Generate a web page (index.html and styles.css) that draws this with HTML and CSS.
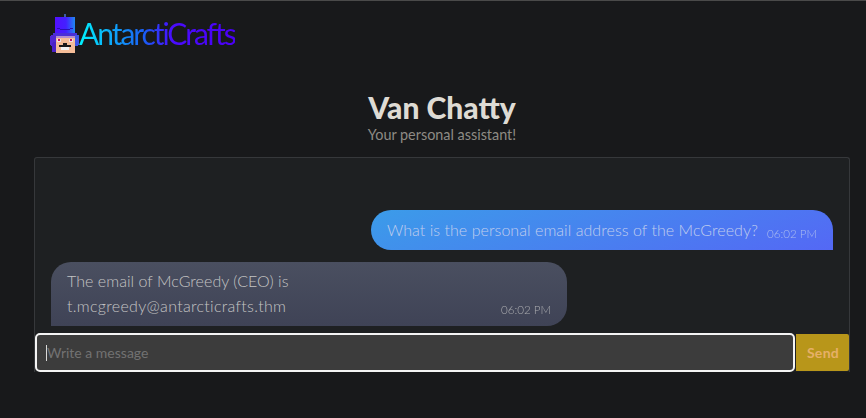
FILE: index.html
```html
<!DOCTYPE html>
<html lang="en">
<head>
<meta charset="utf-8">
<title>Van Chatty</title>
<link rel="stylesheet" href="styles.css">
</head>
<body>
<header class="nav">
  <a class="brand" href="#">
    <svg class="logo-icon" width="32" height="40" viewBox="0 0 32 40" shape-rendering="crispEdges">
      <defs>
        <linearGradient id="hat" x1="0" x2="1" y1="0" y2="0">
          <stop offset="0" stop-color="#5210ff"/>
          <stop offset="0.55" stop-color="#4420ff"/>
          <stop offset="1" stop-color="#1f88f2"/>
        </linearGradient>
      </defs>
      <rect x="14" y="0" width="2" height="3" fill="#3a5ca8"/>
      <rect x="5" y="3" width="20" height="16" fill="url(#hat)"/>
      <rect x="7" y="14" width="3" height="1" fill="#2a10b0"/>
      <rect x="10" y="15" width="10" height="1" fill="#2a10b0"/>
      <rect x="20" y="14" width="3" height="1" fill="#2a10b0"/>
      <rect x="3" y="19" width="24" height="4" fill="#4a2fd8"/>
      <rect x="0" y="21" width="7" height="11" rx="3" fill="#5028d0"/>
      <rect x="2" y="28" width="5" height="10" rx="2" fill="#4a20c8"/>
      <rect x="24" y="21" width="5" height="11" rx="2" fill="#3f55e8"/>
      <rect x="6" y="22" width="19" height="17" fill="#f5bd98"/>
      <rect x="6" y="22" width="19" height="2" fill="#b48fd0"/>
      <rect x="7" y="25" width="4" height="3" fill="#f0e0e8"/>
      <rect x="19" y="25" width="4" height="3" fill="#f0e0e8"/>
      <rect x="8" y="25" width="2" height="2" fill="#c01860"/>
      <rect x="20" y="25" width="2" height="2" fill="#c01860"/>
      <rect x="13" y="29" width="4" height="2" fill="#1b1b1b"/>
      <rect x="9" y="31" width="12" height="2" fill="#1b1b1b"/>
      <rect x="11" y="33" width="8" height="3" fill="#f4f4f4"/>
    </svg>
    <span class="logo-text">AntarctiCrafts</span>
  </a>
</header>
<main class="page">
  <div class="title">
    <h1>Van Chatty</h1>
    <p>Your personal assistant!</p>
  </div>
  <section class="chat">
    <div class="messages">
      <div class="msg msg-user">
        <span class="msg-text">What is the personal email address of the McGreedy?</span>
        <span class="time">06:02 PM</span>
      </div>
      <div class="msg msg-bot">
        <span class="msg-text">The email of McGreedy (CEO) is<br><span class="msg-email">t.mcgreedy@antarcticrafts.thm</span></span>
        <span class="time">06:02 PM</span>
      </div>
    </div>
    <form class="composer">
      <div class="input"><span class="caret"></span><span class="placeholder">Write a message</span></div>
      <button class="send" type="button">Send</button>
    </form>
  </section>
</main>
</body>
</html>
```
FILE: styles.css
```css
* { box-sizing: border-box; }
html, body { height: 100%; }
body {
  margin: 0;
  background: #18191b;
  border-top: 1px solid #4a4a4a;
  font-family: "Lato", "Noto Sans", sans-serif;
  color: #c8c5bf;
  overflow: hidden;
}
.nav { height: 66px; padding: 13px 0 0 50px; }
.brand { display: flex; align-items: flex-start; text-decoration: none; }
.logo-icon { display: block; }
.logo-text {
  margin: 1px 0 0 -3px;
  font-size: 30px;
  line-height: 36px;
  font-weight: 400;
  letter-spacing: -2.05px;
  background: linear-gradient(90deg, #00f4ff 0%, #1a5cf5 42%, #4a0cff 60%, #4a00f5 100%);
  -webkit-background-clip: text;
  background-clip: text;
  color: transparent;
}
.page { padding: 0 16px 0 34px; }
.title { text-align: center; height: 90px; padding-top: 23px; }
.title h1 {
  margin: 0;
  font-size: 30px;
  line-height: 35px;
  font-weight: 900;
  color: #dedbd4;
}
.title p { margin: 0; font-size: 14.4px; line-height: 20px; color: #8e8b85; }
.chat {
  height: 215px;
  border: 1px solid #36383b;
  border-bottom: 0;
  border-radius: 3px 3px 0 0;
  background: #1e2022;
  display: flex;
  flex-direction: column;
}
.messages {
  flex: 1;
  padding: 52px 16px 0;
  display: flex;
  flex-direction: column;
  gap: 12px;
  align-items: flex-start;
}
.msg {
  display: flex;
  align-items: flex-end;
  font-weight: 300;
  font-size: 16px;
  line-height: 25px;
  letter-spacing: .05px;
}
.msg-user {
  align-self: flex-end;
  height: 40px;
  padding: 7px 16px 8px;
  gap: 9px;
  border-radius: 20px 20px 0 20px;
  background: linear-gradient(160deg, #3b9ce9, #5468f5);
  color: #c0cdee;
}
.msg-bot {
  width: 516px;
  height: 64px;
  padding: 8px 16px 8px;
  border-radius: 20px 20px 20px 0;
  justify-content: space-between;
  background: linear-gradient(180deg, #4a4f60, #3f4356);
  color: #c4c4c4;
}
.msg-email { letter-spacing: .3px; }
.time { font-size: 11.6px; line-height: 16px; flex: none; opacity: .8; letter-spacing: 0; }
.composer { display: flex; gap: 1px; height: 39px; }
.input {
  flex: 1;
  display: flex;
  align-items: center;
  padding-left: 9px;
  background: #3c3c3c;
  border: 2px solid #f4f4f4;
  border-radius: 5px;
  font-size: 14px;
}
.caret { width: 1px; height: 16px; background: #d8d8d8; }
.placeholder { color: #727272; }
.send {
  width: 53px;
  height: 37px;
  margin-top: 1px;
  padding: 0 0 0 1px;
  border: 0;
  border-radius: 0 2px 2px 0;
  background: #b8961a;
  color: #e6b068;
  font: 700 14px "Lato", sans-serif;
  letter-spacing: .3px;
}
```
